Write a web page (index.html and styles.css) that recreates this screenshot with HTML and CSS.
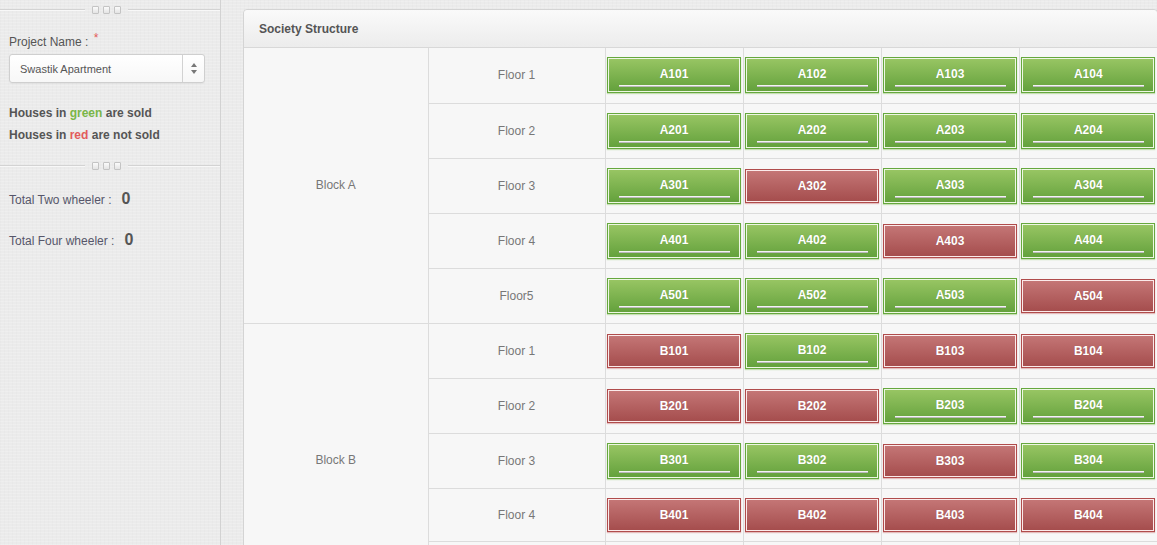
FILE: index.html
```html
<!DOCTYPE html>
<html lang="en">
<head>
  <meta charset="UTF-8" />
  <title>Society Structure</title>
  <link rel="stylesheet" href="styles.css">
</head>
<body>
  <div class="page">
    <aside class="sidebar">
      <div class="divider">
        <span class="divider-line short"></span>
        <span class="dots"><i></i><i></i><i></i></span>
        <span class="divider-line"></span>
      </div>

      <div class="side-section">
        <label class="field-label">Project Name : <span class="req">*</span></label>
        <div class="select-box">
          <span class="select-text">Swastik Apartment</span>
          <span class="select-arrows">
            <span class="arrow-up"></span>
            <span class="arrow-down"></span>
          </span>
        </div>
        <p class="legend">
          Houses in <span class="c-green">green</span> are sold<br>
          Houses in <span class="c-red">red</span> are not sold
        </p>
      </div>

      <div class="divider">
        <span class="divider-line short"></span>
        <span class="dots"><i></i><i></i><i></i></span>
        <span class="divider-line"></span>
      </div>

      <div class="side-section">
        <div class="stat"><span>Total Two wheeler :</span><b>0</b></div>
        <div class="stat"><span>Total Four wheeler :</span><b>0</b></div>
      </div>
    </aside>

    <main class="main">
      <div class="panel">
        <div class="panel-header">Society Structure</div>
        <table class="structure">
          <colgroup>
            <col class="col-block"><col class="col-floor">
            <col class="col-unit"><col class="col-unit"><col class="col-unit"><col class="col-unit">
          </colgroup>
          <tbody>
            <tr>
              <td class="block" rowspan="5">Block A</td>
              <td class="floor">Floor 1</td>
              <td class="unit"><a class="house sold"><span>A101</span><em></em></a></td>
              <td class="unit"><a class="house sold"><span>A102</span><em></em></a></td>
              <td class="unit"><a class="house sold"><span>A103</span><em></em></a></td>
              <td class="unit"><a class="house sold"><span>A104</span><em></em></a></td>
            </tr>
            <tr>
              <td class="floor">Floor 2</td>
              <td class="unit"><a class="house sold"><span>A201</span><em></em></a></td>
              <td class="unit"><a class="house sold"><span>A202</span><em></em></a></td>
              <td class="unit"><a class="house sold"><span>A203</span><em></em></a></td>
              <td class="unit"><a class="house sold"><span>A204</span><em></em></a></td>
            </tr>
            <tr>
              <td class="floor">Floor 3</td>
              <td class="unit"><a class="house sold"><span>A301</span><em></em></a></td>
              <td class="unit"><a class="house free"><span>A302</span></a></td>
              <td class="unit"><a class="house sold"><span>A303</span><em></em></a></td>
              <td class="unit"><a class="house sold"><span>A304</span><em></em></a></td>
            </tr>
            <tr>
              <td class="floor">Floor 4</td>
              <td class="unit"><a class="house sold"><span>A401</span><em></em></a></td>
              <td class="unit"><a class="house sold"><span>A402</span><em></em></a></td>
              <td class="unit"><a class="house free"><span>A403</span></a></td>
              <td class="unit"><a class="house sold"><span>A404</span><em></em></a></td>
            </tr>
            <tr>
              <td class="floor">Floor5</td>
              <td class="unit"><a class="house sold"><span>A501</span><em></em></a></td>
              <td class="unit"><a class="house sold"><span>A502</span><em></em></a></td>
              <td class="unit"><a class="house sold"><span>A503</span><em></em></a></td>
              <td class="unit"><a class="house free"><span>A504</span></a></td>
            </tr>

            <tr>
              <td class="block" rowspan="5">Block B</td>
              <td class="floor">Floor 1</td>
              <td class="unit"><a class="house free"><span>B101</span></a></td>
              <td class="unit"><a class="house sold"><span>B102</span><em></em></a></td>
              <td class="unit"><a class="house free"><span>B103</span></a></td>
              <td class="unit"><a class="house free"><span>B104</span></a></td>
            </tr>
            <tr>
              <td class="floor">Floor 2</td>
              <td class="unit"><a class="house free"><span>B201</span></a></td>
              <td class="unit"><a class="house free"><span>B202</span></a></td>
              <td class="unit"><a class="house sold"><span>B203</span><em></em></a></td>
              <td class="unit"><a class="house sold"><span>B204</span><em></em></a></td>
            </tr>
            <tr>
              <td class="floor">Floor 3</td>
              <td class="unit"><a class="house sold"><span>B301</span><em></em></a></td>
              <td class="unit"><a class="house sold"><span>B302</span><em></em></a></td>
              <td class="unit"><a class="house free"><span>B303</span></a></td>
              <td class="unit"><a class="house sold"><span>B304</span><em></em></a></td>
            </tr>
            <tr class="short-row">
              <td class="floor">Floor 4</td>
              <td class="unit"><a class="house free"><span>B401</span></a></td>
              <td class="unit"><a class="house free"><span>B402</span></a></td>
              <td class="unit"><a class="house free"><span>B403</span></a></td>
              <td class="unit"><a class="house free"><span>B404</span></a></td>
            </tr>
            <tr>
              <td class="floor">Floor5</td>
              <td class="unit"><a class="house sold"><span>B501</span><em></em></a></td>
              <td class="unit"><a class="house free"><span>B502</span></a></td>
              <td class="unit"><a class="house sold"><span>B503</span><em></em></a></td>
              <td class="unit"><a class="house free"><span>B504</span></a></td>
            </tr>
          </tbody>
        </table>
      </div>
    </main>
  </div>
</body>
</html>
```

FILE: styles.css
```css
* {
  box-sizing: border-box;
}

html, body {
  margin: 0;
  padding: 0;
  height: 100%;
  overflow: hidden;
}

body {
  font-family: "Liberation Sans", Arial, sans-serif;
  font-size: 12px;
  color: #555;
  background-color: #ebebeb;
  background-image: repeating-linear-gradient(0deg, rgba(255,255,255,0.18) 0 1px, transparent 1px 3px),
                    repeating-linear-gradient(90deg, rgba(0,0,0,0.012) 0 1px, transparent 1px 4px);
}

.page {
  display: flex;
  height: 100%;
}

/* sidebar */
.sidebar {
  width: 221px;
  flex: none;
  border-right: 1px solid #d2d2d2;
  padding-top: 6px;
}

.divider {
  display: flex;
  align-items: center;
  gap: 7px;
  height: 8px;
}

.divider-line {
  flex: 1;
  height: 2px;
  border-top: 1px solid #d3d3d3;
  border-bottom: 1px solid #f8f8f8;
}

.divider-line.short {
  flex: none;
  width: 85px;
}

.dots {
  display: flex;
  gap: 4px;
}

.dots i {
  display: block;
  width: 7px;
  height: 8px;
  border: 1px solid #c4c4c4;
  border-radius: 1px;
  background: linear-gradient(#fbfbfb, #e4e4e4);
}

.side-section {
  padding: 0 15px 0 9px;
}

.field-label {
  display: block;
  margin-top: 21px;
  line-height: 14px;
  color: #555;
}

.req {
  color: #e25b5b;
  position: relative;
  top: -4px;
  margin-left: 2px;
}

.select-box {
  display: flex;
  align-items: stretch;
  height: 29px;
  margin-top: 5px;
  border: 1px solid #cfcfcf;
  border-radius: 3px;
  background: linear-gradient(#ffffff, #f7f7f7);
  box-shadow: 0 1px 1px rgba(0,0,0,0.04);
}

.select-text {
  flex: 1;
  padding-left: 10px;
  line-height: 28px;
  font-size: 11px;
  color: #555;
}

.select-arrows {
  width: 22px;
  border-left: 1px solid #d2d2d2;
  display: flex;
  flex-direction: column;
  align-items: center;
  justify-content: center;
  gap: 3px;
}

.arrow-up, .arrow-down {
  width: 0;
  height: 0;
  border-left: 3.5px solid transparent;
  border-right: 3.5px solid transparent;
}

.arrow-up {
  border-bottom: 4px solid #777;
}

.arrow-down {
  border-top: 4px solid #777;
}

.legend {
  margin: 19px 0 16px;
  line-height: 22px;
  font-weight: bold;
  color: #555;
}

.c-green {
  color: #7ab648;
}

.c-red {
  color: #e25b5b;
}

.stat {
  display: flex;
  align-items: baseline;
  gap: 10px;
  line-height: 20px;
  margin-top: 19px;
  color: #56566a;
}

.stat + .stat {
  margin-top: 20px;
}

.stat b {
  font-size: 16px;
  color: #555;
}

/* main panel */
.main {
  flex: 1;
  padding: 9px 0 0 22px;
  min-width: 0;
}

.panel {
  width: 915px;
  background: #f7f7f7;
  border: 1px solid #d4d4d4;
  border-radius: 4px 4px 0 0;
}

.panel-header {
  height: 38px;
  line-height: 38px;
  padding-left: 15px;
  font-weight: bold;
  color: #555;
  background: linear-gradient(#fafafa, #ececec);
  border-bottom: 1px solid #d8d8d8;
  border-radius: 4px 4px 0 0;
}

.structure {
  width: 913px;
  table-layout: fixed;
  border-collapse: collapse;
  border-style: hidden;
}

.col-block {
  width: 184px;
}

.col-floor {
  width: 177px;
}

.col-unit {
  width: 138px;
}

.structure td {
  border: 1px solid #dcdcdc;
  height: 55px;
  padding: 0;
  text-align: center;
  vertical-align: middle;
  color: #777;
}

.structure .short-row td {
  height: 53px;
}

.house {
  display: block;
  width: 134px;
  margin: 0 auto;
  border: 1px solid;
  color: #fff;
  font-weight: bold;
  text-decoration: none;
  text-shadow: 0 0 1px rgba(0,0,0,0.15);
}

.house span {
  display: block;
  line-height: 14px;
}

.house.sold {
  height: 36px;
  padding-top: 9px;
  border-color: #66a83e;
  background: linear-gradient(#99c664, #62a03b);
  box-shadow: inset 0 0 0 1px #eef7e4, 0 1px 1px rgba(150, 200, 110, 0.5);
}

.house.sold em {
  display: block;
  height: 2px;
  margin: 4px 10px 0 11px;
  border-top: 1px solid #f4f4f4;
  border-bottom: 1px solid #b9b9b9;
}

.house.free {
  height: 34px;
  border-color: #b04c4c;
  background: linear-gradient(#c57777, #a44c4c);
  box-shadow: inset 0 0 0 1px #fbeaea, 0 1px 1px rgba(210, 130, 130, 0.5);
}

.house.free span {
  line-height: 32px;
}
```
